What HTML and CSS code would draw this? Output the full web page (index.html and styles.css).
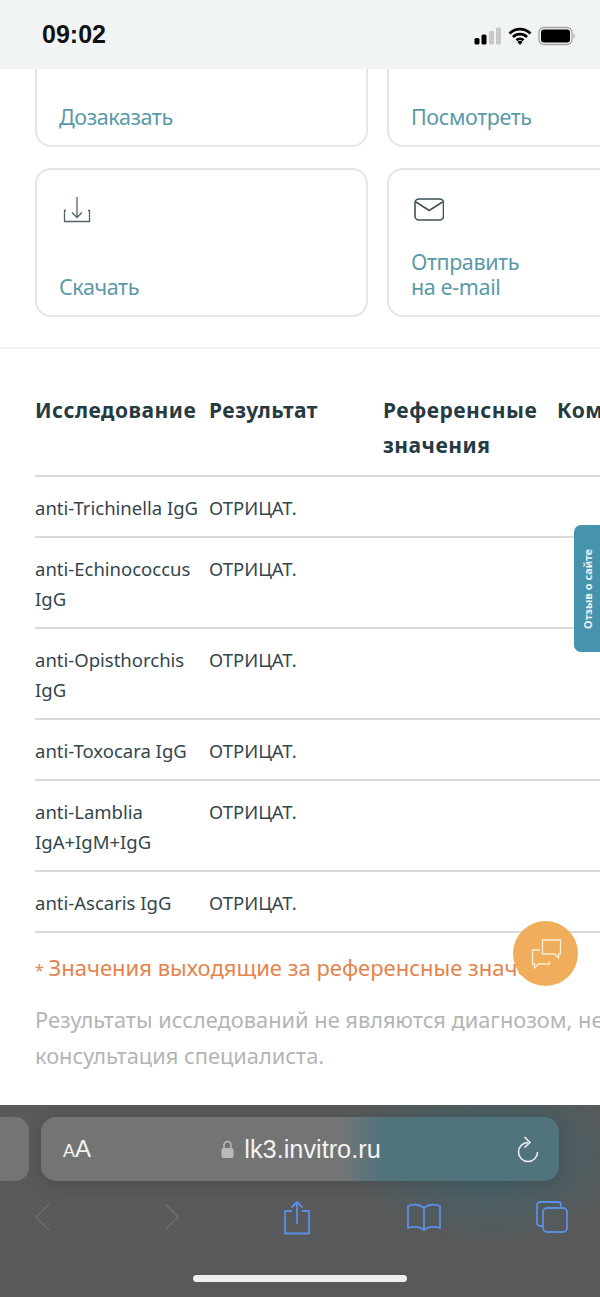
FILE: index.html
```html
<!DOCTYPE html>
<html lang="ru">
<head>
    <meta charset="UTF-8">
    <meta name="viewport" content="width=device-width, initial-scale=1.0">
    <title>lk3.invitro.ru</title>
    <link rel="stylesheet" href="styles.css">
</head>
<body>
    <div class="status-bar">
        <span class="clock">09:02</span>
        <div class="status-icons">
            <svg width="28" height="18" viewBox="0 0 28 18">
                <rect x="0.500" y="11" width="5" height="6.500" rx="1.500" fill="#000"/>
                <rect x="7.500" y="7.500" width="5" height="10" rx="1.500" fill="#000"/>
                <rect x="15" y="4" width="5" height="13.500" rx="1.500" fill="#c6c8c9"/>
                <rect x="22" y="0.500" width="5" height="17" rx="1.500" fill="#c6c8c9"/>
            </svg>
            <svg width="24" height="18" viewBox="0 0 24 18">
                <path d="M1.500 6.500a15 15 0 0 1 21 0M5 10a10 10 0 0 1 14 0M8.500 13.300a5 5 0 0 1 7 0" fill="none" stroke="#000" stroke-width="2.800"/>
                <path d="M12 18l-2.600-3a3.500 3.500 0 0 1 5.200 0z" fill="#000"/>
            </svg>
            <svg width="38" height="20" viewBox="0 0 38 20">
                <rect x="1" y="1.500" width="33" height="17" rx="5" fill="none" stroke="#a5a7a8" stroke-width="1.300"/>
                <rect x="3" y="3.500" width="29" height="13" rx="3" fill="#000"/>
                <path d="M35.500 7.500c1.800.4 1.800 4.600 0 5z" fill="#a5a7a8"/>
            </svg>
        </div>
    </div>

    <div class="page">
        <div class="actions">
            <div class="tiles">
                <a class="tile"><span class="tile-label">Дозаказать</span></a>
                <a class="tile"><span class="tile-label">Посмотреть</span></a>
                <a class="tile">
                    <svg class="tile-icon" width="30" height="30" viewBox="0 0 30 30">
                        <path d="M15 1v20M10 16.500l5 5 5-5M4 14.500H2.500v11h25v-11H26" fill="none" stroke="#4f6369" stroke-width="1.300"/>
                    </svg>
                    <span class="tile-label">Скачать</span>
                </a>
                <a class="tile">
                    <svg class="tile-icon" width="30" height="30" viewBox="0 0 30 30">
                        <rect x="1" y="3" width="28.500" height="21" rx="4" fill="none" stroke="#3f5157" stroke-width="1.600"/>
                        <path d="M2 6l13.200 8.500L28.500 6" fill="none" stroke="#3f5157" stroke-width="1.600"/>
                    </svg>
                    <span class="tile-label">Отправить<br>на e-mail</span>
                </a>
            </div>
        </div>

        <table class="results">
            <thead>
                <tr>
                    <th>Исследование</th>
                    <th>Результат</th>
                    <th>Референсные значения</th>
                    <th>Комментарий</th>
                </tr>
            </thead>
            <tbody>
                <tr><td>anti-Trichinella IgG</td><td>ОТРИЦАТ.</td><td></td><td></td></tr>
                <tr><td>anti-Echinococcus IgG</td><td>ОТРИЦАТ.</td><td></td><td></td></tr>
                <tr><td>anti-Opisthorchis IgG</td><td>ОТРИЦАТ.</td><td></td><td></td></tr>
                <tr><td>anti-Toxocara IgG</td><td>ОТРИЦАТ.</td><td></td><td></td></tr>
                <tr><td>anti-Lamblia IgA+IgM+IgG</td><td>ОТРИЦАТ.</td><td></td><td></td></tr>
                <tr><td>anti-Ascaris IgG</td><td>ОТРИЦАТ.</td><td></td><td></td></tr>
            </tbody>
        </table>

        <p class="note"><span class="star">*</span> Значения выходящие за референсные значения</p>
        <p class="disclaimer">Результаты исследований не являются диагнозом, необходима консультация специалиста.</p>

        <div class="feedback-tab"><span>Отзыв о сайте</span></div>
        <div class="chat-btn">
            <svg width="34" height="34" viewBox="0 0 34 34">
                <path d="M13.500 17V3h18v14h-2v4l-4-4z" fill="none" stroke="#fbeed9" stroke-width="1.300"/>
                <path d="M11 13H3.500v14h2v4l4-4h11v-3" fill="none" stroke="#fbeed9" stroke-width="1.300"/>
            </svg>
        </div>
    </div>

    <div class="browser-bar">
        <div class="tabs-row">
            <div class="prev-tab"></div>
            <div class="address">
                <span class="aa"><small>A</small>A</span>
                <span class="url">
                    <svg width="13" height="19" viewBox="0 0 13 19">
                        <path d="M3 8V5a3.500 3.500 0 0 1 7 0v3" fill="none" stroke="#b9bbbb" stroke-width="1.500"/>
                        <rect x="0.500" y="8" width="12" height="10" rx="2" fill="#b9bbbb"/>
                    </svg>
                    lk3.invitro.ru
                </span>
                <svg class="reload" width="24" height="28" viewBox="0 0 24 28">
                    <path d="M12 7.500a9.500 9.500 0 1 0 9.500 9.500M8.500 2l5.500 5.500-5.500 5" fill="none" stroke="#f1f3f3" stroke-width="1.500"/>
                </svg>
            </div>
        </div>
        <div class="tool-row">
            <svg width="16" height="28" viewBox="0 0 16 28"><path d="M15 1L2 14l13 13" fill="none" stroke="#6d6e6f" stroke-width="1.500"/></svg>
            <svg width="16" height="28" viewBox="0 0 16 28"><path d="M1 1l13 13L1 27" fill="none" stroke="#6d6e6f" stroke-width="1.500"/></svg>
            <svg width="28" height="35" viewBox="0 0 28 35"><path d="M9 11H2v22.500h24V11h-7M14 24V2M8.500 7.500L14 2l5.500 5.500" fill="none" stroke="#5b8fe3" stroke-width="1.800" stroke-linejoin="round"/></svg>
            <svg width="36" height="30" viewBox="0 0 36 30"><path d="M18 6C14 2 7 2 2 4v22c5-2 12-1.500 16 2 4-3.500 11-4 16-2V4c-5-2-12-2-16 2zV28" fill="none" stroke="#5b8fe3" stroke-width="1.800" stroke-linejoin="round"/></svg>
            <svg width="34" height="34" viewBox="0 0 34 34"><path d="M7 26H5a3 3 0 0 1-3-3V5a3 3 0 0 1 3-3h18a3 3 0 0 1 3 3v2" fill="none" stroke="#5b8fe3" stroke-width="1.800"/><rect x="8" y="8" width="24" height="24" rx="4" fill="none" stroke="#5b8fe3" stroke-width="1.800"/></svg>
        </div>
        <div class="home-bar"></div>
    </div>
</body>
</html>
```

FILE: styles.css
```css
body {
    margin: 0;
    width: 600px;
    height: 1297px;
    overflow: hidden;
    display: flex;
    flex-direction: column;
    font-family: "Noto Sans", Arial, sans-serif;
    background-color: white;
}

.status-bar {
    height: 69px;
    flex-shrink: 0;
    display: flex;
    justify-content: space-between;
    align-items: center;
    padding: 0 24px 0 42px;
    box-sizing: border-box;
    background-color: #f1f4f5;
}

.clock {
    font-family: "Liberation Sans", Arial, sans-serif;
    font-size: 25px;
    font-weight: 700;
    color: #111;
}

.status-icons {
    display: flex;
    align-items: center;
    gap: 6px;
    margin-top: 2px;
}

.page {
    flex: 1;
    position: relative;
    overflow: hidden;
}

.actions {
    margin-top: -71px;
    padding: 0 0 30px 35px;
    border-bottom: 2px solid #f0f0f0;
}

.tiles {
    display: grid;
    grid-template-columns: 333px 333px;
    grid-auto-rows: 149px;
    gap: 21px 19px;
}

.tile {
    border: 2px solid #e5e7e7;
    border-radius: 16px;
    padding: 0 22px 16px;
    display: flex;
    flex-direction: column;
    justify-content: flex-end;
    position: relative;
    box-sizing: border-box;
}

.tile-icon {
    position: absolute;
    left: 25px;
    top: 26px;
}

.tile-label {
    font-size: 21.5px;
    letter-spacing: -0.4px;
    line-height: 25px;
    color: #5a9aa8;
}

.results {
    border-collapse: collapse;
    table-layout: fixed;
    width: 696px;
    margin: 28px 0 0 35px;
}

.results th {
    font-size: 21px;
    letter-spacing: 0.5px;
    line-height: 35px;
    font-weight: 700;
    color: #263a42;
    text-align: left;
    vertical-align: top;
    padding: 16px 10px 12px 0;
    overflow: hidden;
    white-space: nowrap;
}

.results th:nth-child(3) {
    white-space: normal;
}

.results th, .results td {
    border-bottom: 2px solid #d9dbdb;
}

.results td {
    font-size: 18.5px;
    line-height: 30px;
    color: #33464d;
    vertical-align: top;
    padding: 16px 8px 13px 0;
}

.note {
    margin: 16px 0 0 35px;
    width: 525px;
    overflow: hidden;
    white-space: nowrap;
    font-size: 22px;
    line-height: 36px;
    color: #e5834c;
}

.star {
    font-size: 16px;
    margin-right: -1px;
}

.disclaimer {
    margin: 14px 0 0 35px;
    width: 720px;
    font-size: 21.8px;
    line-height: 36px;
    color: #b3b5b5;
}

.feedback-tab {
    position: absolute;
    right: 0;
    top: 456px;
    width: 26px;
    height: 127px;
    background-color: #4693ad;
    border-radius: 7px 0 0 7px;
    display: flex;
    align-items: center;
    justify-content: center;
}

.feedback-tab span {
    writing-mode: vertical-rl;
    transform: rotate(180deg);
    font-size: 11px;
    font-weight: 700;
    color: #e8f2f5;
    white-space: nowrap;
}

.chat-btn {
    position: absolute;
    left: 513px;
    top: 852px;
    width: 65px;
    height: 65px;
    border-radius: 50%;
    background-color: #f0ad5c;
    display: flex;
    align-items: center;
    justify-content: center;
}

.browser-bar {
    height: 192px;
    flex-shrink: 0;
    background: radial-gradient(ellipse 140px 90px at 490px 50px, #3f6269 0%, rgba(88, 90, 91, 0) 100%), #58595a;
    box-sizing: border-box;
    padding-top: 12px;
    display: flex;
    flex-direction: column;
}

.tabs-row {
    display: flex;
    gap: 12px;
    height: 64px;
}

.prev-tab {
    width: 29px;
    border-radius: 0 14px 14px 0;
    background-color: #727475;
}

.address {
    width: 518px;
    padding: 0 19px 0 22px;
    box-sizing: border-box;
    border-radius: 15px;
    background: linear-gradient(90deg, #737575 0%, #737575 58%, #50737c 66%, #50737c 100%);
    box-shadow: 0 2px 14px rgba(40, 50, 55, 0.3);
    display: flex;
    align-items: center;
    justify-content: space-between;
    color: #f2f3f3;
}

.aa {
    font-family: "Liberation Sans", Arial, sans-serif;
    font-size: 24px;
}

.aa small {
    font-size: 18px;
}

.url {
    font-family: "Liberation Sans", Arial, sans-serif;
    font-size: 25.3px;
    display: flex;
    align-items: center;
    gap: 10px;
    margin-right: 5px;
}

.tool-row {
    display: grid;
    grid-template-columns: 130px 119px 123px 129px auto;
    align-items: center;
    padding-left: 34px;
    height: 50px;
    margin-top: 11px;
}

.home-bar {
    width: 214px;
    height: 7px;
    margin: 33px auto 0;
    border-radius: 4px;
    background-color: #eef0f0;
}
```
